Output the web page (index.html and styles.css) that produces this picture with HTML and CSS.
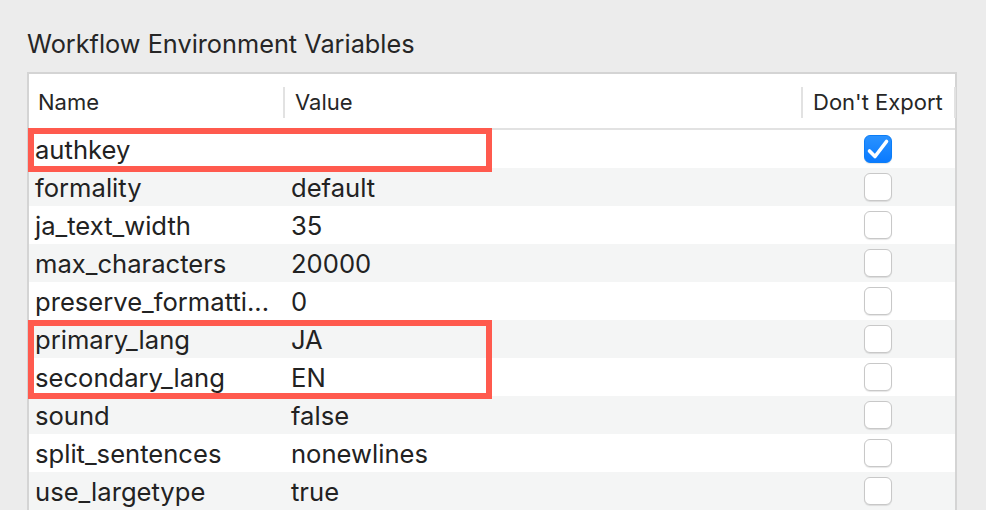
FILE: index.html
```html
<!DOCTYPE html>
<html>
<head>
<meta charset="utf-8">
<link rel="stylesheet" href="styles.css">
</head>
<body>
<div class="page">
  <h1 class="title">Workflow Environment Variables</h1>
  <div class="table">
    <div class="header">
      <div class="hcell">Name</div>
      <div class="hcell">Value</div>
      <div class="hcell">Don't Export</div>
      <div class="hcell hlast"></div>
    </div>
    <div class="row"><div class="cell name">authkey</div><div class="cell value"></div><div class="cell check"><span class="cb on"><svg viewBox="0 0 28 28" width="28" height="28"><path d="M5.5 16 L11 21.5 L22.5 6.5" fill="none" stroke="#fff" stroke-width="3.6" stroke-linecap="round" stroke-linejoin="round"/></svg></span></div></div>
    <div class="row"><div class="cell name">formality</div><div class="cell value">default</div><div class="cell check"><span class="cb"></span></div></div>
    <div class="row"><div class="cell name">ja_text_width</div><div class="cell value">35</div><div class="cell check"><span class="cb"></span></div></div>
    <div class="row"><div class="cell name">max_characters</div><div class="cell value">20000</div><div class="cell check"><span class="cb"></span></div></div>
    <div class="row"><div class="cell name">preserve_formatti...</div><div class="cell value">0</div><div class="cell check"><span class="cb"></span></div></div>
    <div class="row"><div class="cell name">primary_lang</div><div class="cell value">JA</div><div class="cell check"><span class="cb"></span></div></div>
    <div class="row"><div class="cell name">secondary_lang</div><div class="cell value">EN</div><div class="cell check"><span class="cb"></span></div></div>
    <div class="row"><div class="cell name">sound</div><div class="cell value">false</div><div class="cell check"><span class="cb"></span></div></div>
    <div class="row"><div class="cell name">split_sentences</div><div class="cell value">nonewlines</div><div class="cell check"><span class="cb"></span></div></div>
    <div class="row"><div class="cell name">use_largetype</div><div class="cell value">true</div><div class="cell check"><span class="cb"></span></div></div>
    <div class="mark mark1"></div>
    <div class="mark mark2"></div>
  </div>
</div>
</body>
</html>
```

FILE: styles.css
```css
html, body {
  margin: 0;
  padding: 0;
  background: #ececec;
  overflow: hidden;
  height: 510px;
}
.page {
  padding: 0 0 0 27px;
  font-family: "Inter", "Liberation Sans", sans-serif;
  color: #222;
}
.title {
  margin: 0;
  padding-top: 29px;
  height: 72px;
  box-sizing: border-box;
  font-size: 25.3px;
  font-weight: 400;
  line-height: 30px;
  color: #262626;
}
.table {
  position: relative;
  width: 930px;
  background: #fff;
  border: 2px solid #d4d4d4;
  border-bottom: none;
  box-sizing: border-box;
}
.header {
  display: grid;
  grid-template-columns: 254px 518px 153px 1fr;
  height: 41px;
  border-bottom: 2px solid #e2e2e2;
  align-items: start;
  padding-top: 13px;
}
.hcell {
  font-size: 22px;
  color: #262626;
  padding-left: 9px;
  border-left: 2px solid #e2e2e2;
  height: 31px;
  line-height: 31px;
}
.hcell:first-child {
  border-left: none;
}
.hcell:nth-child(2),
.hcell:nth-child(3) {
  padding-left: 10px;
}
.hlast {
  padding: 0;
}
.row {
  display: grid;
  grid-template-columns: 256px 516px 153px 1fr;
  height: 38px;
  align-items: center;
  font-size: 25.6px;
}
.row:nth-of-type(odd) {
  background: #f4f5f5;
}
.row:nth-of-type(even) {
  background: #fff;
}
.cell {
  white-space: nowrap;
  overflow: hidden;
  text-overflow: ellipsis;
  line-height: 36px;
  padding-top: 2px;
}
.name {
  padding-left: 6px;
  padding-right: 4px;
}
.value {
  padding-left: 6px;
}
.check {
  display: flex;
  justify-content: center;
  align-items: center;
  padding-top: 0;
  height: 38px;
}
.cb {
  display: block;
  width: 26px;
  height: 26px;
  border-radius: 6px;
  border: 1px solid #c8c8c8;
  background: #fff;
  box-shadow: 0 1px 1px rgba(0,0,0,0.1);
}
.cb.on {
  border: 1px solid #0b7df7;
  background: linear-gradient(#2a92ff, #0a7aff);
  position: relative;
}
.cb.on svg {
  position: absolute;
  left: -1px;
  top: -1px;
}
.mark {
  position: absolute;
  left: -1px;
  width: 464px;
  border: 6px solid #ff5a4e;
  box-sizing: border-box;
}
.mark1 {
  top: 54px;
  height: 44px;
}
.mark2 {
  top: 246px;
  height: 79px;
}
```
